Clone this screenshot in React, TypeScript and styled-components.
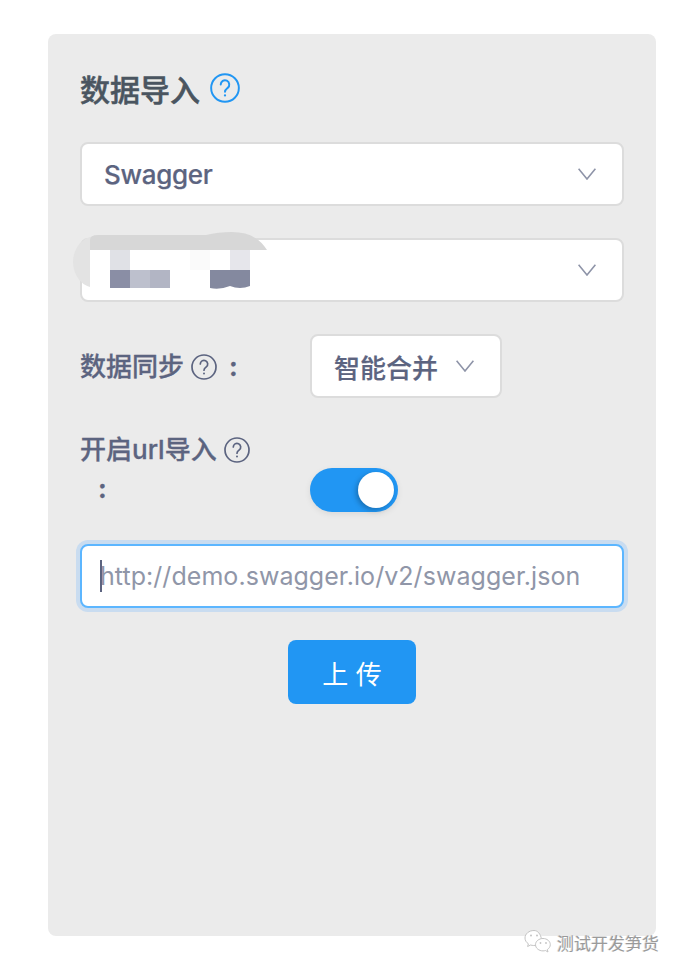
import React from 'react';
import styled, {createGlobalStyle} from 'styled-components';

const GlobalStyle = createGlobalStyle`
  html, body {
    margin: 0;
    padding: 0;
    background: #fff;
  }
  body {
    font-family: Inter, "Noto Sans CJK SC", sans-serif;
  }
`

const HelpIcon = ({size, color}: {size: number, color: string}) => (
    <HelpSvg width={size} height={size} viewBox="0 0 26 26" fill="none" stroke={color}>
        <circle cx="13" cy="13" r="12" strokeWidth="1.7"/>
        <path d="M9.3 10a3.7 3.7 0 1 1 6 2.9c-1.3 1-2.3 1.6-2.3 3.3" strokeWidth="1.7" strokeLinecap="round"/>
        <circle cx="13" cy="19.4" r="1" fill={color} stroke="none"/>
    </HelpSvg>
);

const Chevron = () => (
    <svg width="18" height="12" viewBox="0 0 18 12" fill="none" stroke="#8e94a8" strokeWidth="1.6">
        <path d="M0.6 0.8 L9 11 L17.4 0.8"/>
    </svg>
);

const Smudge = () => (
    <SmudgeSvg width="200" height="66" viewBox="72 230 200 66">
        <ellipse cx="96" cy="262" rx="23" ry="26" fill="#e3e3e3"/>
        <path d="M90 250 V240 Q90 235 98 235 H206 Q218 232 232 232 Q256 232 267 250 Z" fill="#d7d7d7"/>
        <path d="M90 250 H262 Q256 280 246 288 H90 Z" fill="#fff"/>
        <rect x="110" y="250" width="20" height="20" fill="#e0e1e6"/>
        <rect x="190" y="250" width="20" height="20" fill="#fafafa"/>
        <rect x="230" y="250" width="20" height="20" fill="#e6e6eb"/>
        <rect x="110" y="270" width="20" height="18" fill="#8a8ea5"/>
        <rect x="130" y="270" width="20" height="18" fill="#bdc0cd"/>
        <rect x="150" y="270" width="20" height="18" fill="#b2b5c4"/>
        <path d="M210 270 H250 V286 Q240 290 230 286 Q220 290 210 288 Z" fill="#84899f"/>
    </SmudgeSvg>
);

const WechatIcon = () => (
    <svg width="28" height="26" viewBox="0 0 28 26" fill="#fff" stroke="#c4c4c4" strokeWidth="1">
        <path d="M10 1.5C5 1.5 1 4.8 1 9c0 2.4 1.3 4.400 3.400 5.800L3.600 17.500l3-1.500c1 .3 2 .5 3.100.5 3.900 0 7-3 7.800-6.500C16.500 5 13.800 1.500 10 1.500Z"/>
        <path d="M19 9.500c-4 0-7.500 2.700-7.500 6.200s3.500 6.200 7.500 6.200c.8 0 1.700-.1 2.400-.4l2.600 1.500-.7-2.400c1.800-1.200 3-2.900 3-4.900 0-3.500-3.300-6.200-7.300-6.200Z"/>
        <circle cx="7" cy="6.500" r="1" fill="#c4c4c4" stroke="none"/>
        <circle cx="13" cy="6.500" r="1" fill="#c4c4c4" stroke="none"/>
        <circle cx="16.500" cy="14" r="0.900" fill="#c4c4c4" stroke="none"/>
        <circle cx="22" cy="14" r="0.900" fill="#c4c4c4" stroke="none"/>
    </svg>
);

export default function App() {
    return (
        <>
            <GlobalStyle/>
            <Page>
                <Panel>
                    <Title>
                        数据导入
                        <HelpIcon size={30} color="#2196f3"/>
                    </Title>
                    <Select>
                        <SelectText $latin>Swagger</SelectText>
                        <Chevron/>
                    </Select>
                    <Select>
                        <SelectText/>
                        <Chevron/>
                        <Smudge/>
                    </Select>
                    <SyncRow>
                        <Label>
                            数据同步
                            <HelpIcon size={26} color="#5c6480"/>
                            <Colon>:</Colon>
                        </Label>
                        <Select $inline>
                            <SelectText>智能合并</SelectText>
                            <Chevron/>
                        </Select>
                    </SyncRow>
                    <UrlRow>
                        <Label>
                            开启url导入
                            <HelpIcon size={26} color="#5c6480"/>
                            <Colon $wrapped>:</Colon>
                        </Label>
                        <Toggle>
                            <Knob/>
                        </Toggle>
                    </UrlRow>
                    <InputWrap>
                        <UrlInput readOnly placeholder="http://demo.swagger.io/v2/swagger.json"/>
                        <Caret/>
                    </InputWrap>
                    <Actions>
                        <UploadButton>上 传</UploadButton>
                    </Actions>
                </Panel>
                <Watermark>
                    <WechatIcon/>
                    <WatermarkText>测试开发笋货</WatermarkText>
                </Watermark>
            </Page>
        </>
    );
}

const Page = styled.div`
  position: relative;
  width: 680px;
  height: 972px;
  padding: 34px 24px 36px 48px;
  box-sizing: border-box;
  overflow: hidden;
`
const Panel = styled.div`
  height: 902px;
  box-sizing: border-box;
  padding: 34px 32px;
  background: #ebebeb;
  border-radius: 8px;
  display: flex;
  flex-direction: column;
`
const Title = styled.h2`
  margin: 0 0 34px;
  height: 40px;
  display: flex;
  align-items: center;
  gap: 10px;
  font-size: 30px;
  font-weight: 500;
  -webkit-text-stroke: 0.5px #4a5560;
  color: #4a5560;
`
const HelpSvg = styled.svg`
  flex: none;
`
const Select = styled.div<{$inline?: boolean}>`
  position: relative;
  box-sizing: border-box;
  height: 64px;
  width: ${props => props.$inline ? '192px' : '100%'};
  margin-bottom: ${props => props.$inline ? '0' : '32px'};
  padding: 0 26px 0 22px;
  display: flex;
  align-items: center;
  justify-content: space-between;
  background: #fff;
  border: 2px solid #dcdcdc;
  border-radius: 8px;
`
const SelectText = styled.span<{$latin?: boolean}>`
  font-size: 26px;
  font-weight: 500;
  letter-spacing: ${props => props.$latin ? '-0.3px' : '0'};
  -webkit-text-stroke: 0.2px #5c6480;
  color: #5c6480;
`
const SmudgeSvg = styled.svg`
  position: absolute;
  left: -10px;
  top: -10px;
`
const SyncRow = styled.div`
  display: flex;
  align-items: center;
  height: 64px;
  margin-bottom: 32px;
`
const UrlRow = styled.div`
  display: flex;
  align-items: flex-start;
  height: 82px;
  margin-bottom: 32px;
`
const Label = styled.label`
  width: 230px;
  flex: none;
  box-sizing: border-box;
  padding-right: 50px;
  font-size: 26px;
  font-weight: 500;
  line-height: 39px;
  -webkit-text-stroke: 0.3px #5c6480;
  color: #5c6480;
  ${HelpSvg} {
    margin-left: 7px;
    vertical-align: -4px;
  }
`
const Colon = styled.span<{$wrapped?: boolean}>`
  display: ${props => props.$wrapped ? 'block' : 'inline'};
  margin-left: ${props => props.$wrapped ? '18px' : '12px'};
  font-weight: 700;
`
const Toggle = styled.div`
  position: relative;
  align-self: flex-end;
  width: 88px;
  height: 44px;
  border-radius: 22px;
  background: #2196f3;
  box-shadow: 0 2px 6px rgba(0, 0, 0, 0.08);
`
const Knob = styled.div`
  position: absolute;
  right: 4px;
  top: 4px;
  width: 36px;
  height: 36px;
  border-radius: 50%;
  background: #fff;
  box-shadow: -2px 2px 5px rgba(0, 0, 0, 0.25);
`
const InputWrap = styled.div`
  position: relative;
  height: 64px;
  margin-bottom: 32px;
`
const UrlInput = styled.input`
  display: block;
  width: 100%;
  height: 100%;
  box-sizing: border-box;
  padding: 0 18px;
  background: #fff;
  border: 2px solid #5cb6ff;
  border-radius: 8px;
  box-shadow: 0 0 0 4px #c9dcf0;
  outline: none;
  font-family: Inter, "Noto Sans CJK SC", sans-serif;
  font-size: 25px;
  letter-spacing: 0.05px;
  color: #5c6480;
  &::placeholder {
    color: #9096a8;
    opacity: 1;
  }
`
const Caret = styled.span`
  position: absolute;
  left: 20px;
  top: 16px;
  width: 2px;
  height: 32px;
  background: #5c6480;
`
const Actions = styled.div`
  display: flex;
  justify-content: center;
`
const UploadButton = styled.button`
  width: 128px;
  height: 64px;
  border: none;
  border-radius: 8px;
  background: #2196f3;
  color: #fff;
  font-family: Inter, "Noto Sans CJK SC", sans-serif;
  font-size: 26px;
`
const Watermark = styled.div`
  position: absolute;
  left: 524px;
  top: 929px;
  display: flex;
  align-items: center;
  gap: 5px;
`
const WatermarkText = styled.span`
  font-size: 17px;
  color: #9a9a9a;
  white-space: nowrap;
  text-shadow: 1px 1px 0 #fff, -1px 0 0 #ddd;
`
